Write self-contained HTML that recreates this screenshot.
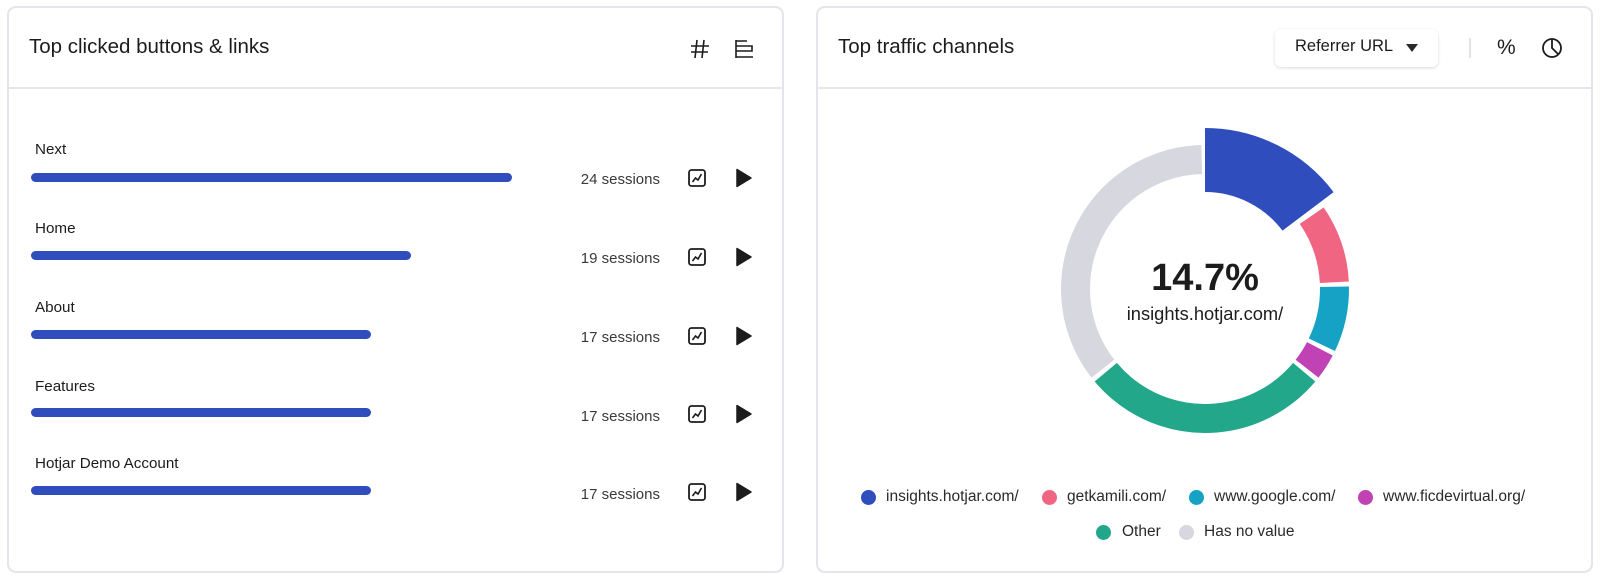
<!DOCTYPE html>
<html><head><meta charset="utf-8"><style>
*{margin:0;padding:0;box-sizing:border-box}
body{width:1600px;height:579px;background:#fff;font-family:"Liberation Sans",sans-serif;color:#1c1c1c;position:relative;overflow:hidden}
.card{position:absolute;top:6px;height:567px;border:2px solid #e4e5ea;border-radius:9px;background:#fff}
.div{position:absolute;left:0;right:0;top:79px;height:2px;background:#e6e7eb}
.t{position:absolute;font-size:20.5px;white-space:nowrap}
.lab{position:absolute;font-size:15.2px;left:26px}
.bar{position:absolute;left:22px;height:9px;border-radius:5px;background:#2f4dbd}
.ses{position:absolute;right:122px;font-size:15px;color:#3a3a3a;white-space:nowrap}
.ic{position:absolute}
.lg{position:absolute;font-size:15.5px;white-space:nowrap;color:#2a2a2a}
.dot{position:absolute;width:15px;height:15px;border-radius:50%}
</style></head><body>
<div class="card" style="left:7px;width:777px">
  <div class="t" style="left:20px;top:27px">Top clicked buttons &amp; links</div>
  <svg class="ic" style="left:680px;top:30px" width="22" height="22" viewBox="0 0 22 22" fill="none" stroke="#1c1c1c" stroke-width="1.6"><path d="M8 2 L6 20 M15 2 L13 20 M2 8 H20 M2 14 H19"/></svg>
  <svg class="ic" style="left:724px;top:30px" width="22" height="22" viewBox="0 0 22 22" fill="none" stroke="#1c1c1c" stroke-width="1.6"><path d="M3 2 V20 M3 3 H14 M3 8 H19 V13 H3 M3 19 H20"/></svg>
  <div class="div"></div>
  <div class="lab" style="top:133px">Next</div><div class="bar" style="top:165px;width:481px"></div><div class="ses" style="top:163px">24 sessions</div>
  <div class="lab" style="top:212px">Home</div><div class="bar" style="top:243px;width:380px"></div><div class="ses" style="top:242px">19 sessions</div>
  <div class="lab" style="top:291px">About</div><div class="bar" style="top:322px;width:340px"></div><div class="ses" style="top:321px">17 sessions</div>
  <div class="lab" style="top:370px">Features</div><div class="bar" style="top:400px;width:340px"></div><div class="ses" style="top:400px">17 sessions</div>
  <div class="lab" style="top:447px">Hotjar Demo Account</div><div class="bar" style="top:478px;width:340px"></div><div class="ses" style="top:478px">17 sessions</div>
</div>
<svg style="position:absolute;left:0;top:0" width="800" height="579">
  <defs>
    <g id="tr"><rect x="-8" y="-8" width="16" height="16" rx="2.5" fill="none" stroke="#1c1c1c" stroke-width="1.8"/><path d="M-4.5 4 L-1.5 0 L1 2 L4.5 -4" fill="none" stroke="#1c1c1c" stroke-width="1.6"/></g>
    <g id="pl"><path d="M-6 -8.5 L8 0 L-6 8.5 Z" fill="#1c1c1c" stroke="#1c1c1c" stroke-width="1.5" stroke-linejoin="round"/></g>
  </defs>
  <use href="#tr" x="697" y="178"/><use href="#pl" x="743" y="178"/>
  <use href="#tr" x="697" y="257"/><use href="#pl" x="743" y="257"/>
  <use href="#tr" x="697" y="336"/><use href="#pl" x="743" y="336"/>
  <use href="#tr" x="697" y="414"/><use href="#pl" x="743" y="414"/>
  <use href="#tr" x="697" y="492"/><use href="#pl" x="743" y="492"/>
</svg>
<div class="card" style="left:816px;width:777px">
  <div class="t" style="left:20px;top:27px">Top traffic channels</div>
  <div style="position:absolute;left:457px;top:21px;width:163px;height:38px;border-radius:6px;box-shadow:0 1px 3px rgba(0,0,0,0.15);background:#fff"></div>
  <div class="t" style="left:477px;top:29px;font-size:16.5px">Referrer URL</div>
  <svg class="ic" style="left:588px;top:36px" width="12" height="8"><path d="M0 0 H12 L6 8 Z" fill="#2a2a2a"/></svg>
  <div style="position:absolute;left:651px;top:30px;width:2px;height:20px;background:#e2e3e7"></div>
  <div class="t" style="left:679px;top:28px;font-size:21px">%</div>
  <svg class="ic" style="left:723px;top:29px" width="22" height="22" viewBox="0 0 22 22" fill="none" stroke="#1c1c1c" stroke-width="1.8"><circle cx="11" cy="11" r="9"/><path d="M11 2 V11 L17 17"/></svg>
  <div class="div"></div>
</div>
<svg style="position:absolute;left:0;top:0" width="1600" height="579">
  <g transform="translate(1205,289)" fill="none">
    <circle r="129.5" stroke="#ef6582" stroke-width="29" stroke-dasharray="71.2 900" transform="rotate(-34.5)"/>
    <circle r="129.5" stroke="#16a2c4" stroke-width="29" stroke-dasharray="59.9 900" transform="rotate(-1)"/>
    <circle r="129.5" stroke="#c042b4" stroke-width="29" stroke-dasharray="23.7 900" transform="rotate(27.5)"/>
    <circle r="129.5" stroke="#22a78a" stroke-width="29" stroke-dasharray="226 900" transform="rotate(40)"/>
    <circle r="129.5" stroke="#d6d7df" stroke-width="29" stroke-dasharray="285.9 900" transform="rotate(142)"/>
    <circle r="129" stroke="#2f4dbd" stroke-width="64" stroke-dasharray="119.3 900" transform="rotate(-90)"/>
  </g>
  <text x="1205" y="290" text-anchor="middle" font-family="Liberation Sans" font-size="38" font-weight="bold" fill="#1c1c1c">14.7%</text>
  <text x="1205" y="320" text-anchor="middle" font-family="Liberation Sans" font-size="18.3" fill="#1c1c1c">insights.hotjar.com/</text>
</svg>
<div class="dot" style="left:861px;top:490px;background:#2f4dbd"></div><div class="lg" style="left:886px;top:488px">insights.hotjar.com/</div>
<div class="dot" style="left:1042px;top:490px;background:#ef6582"></div><div class="lg" style="left:1067px;top:488px">getkamili.com/</div>
<div class="dot" style="left:1189px;top:490px;background:#16a2c4"></div><div class="lg" style="left:1214px;top:488px">www.google.com/</div>
<div class="dot" style="left:1358px;top:490px;background:#c042b4"></div><div class="lg" style="left:1383px;top:488px">www.ficdevirtual.org/</div>
<div class="dot" style="left:1096px;top:525px;background:#22a78a"></div><div class="lg" style="left:1122px;top:523px">Other</div>
<div class="dot" style="left:1179px;top:525px;background:#d6d7df"></div><div class="lg" style="left:1204px;top:523px">Has no value</div>
</body></html>
